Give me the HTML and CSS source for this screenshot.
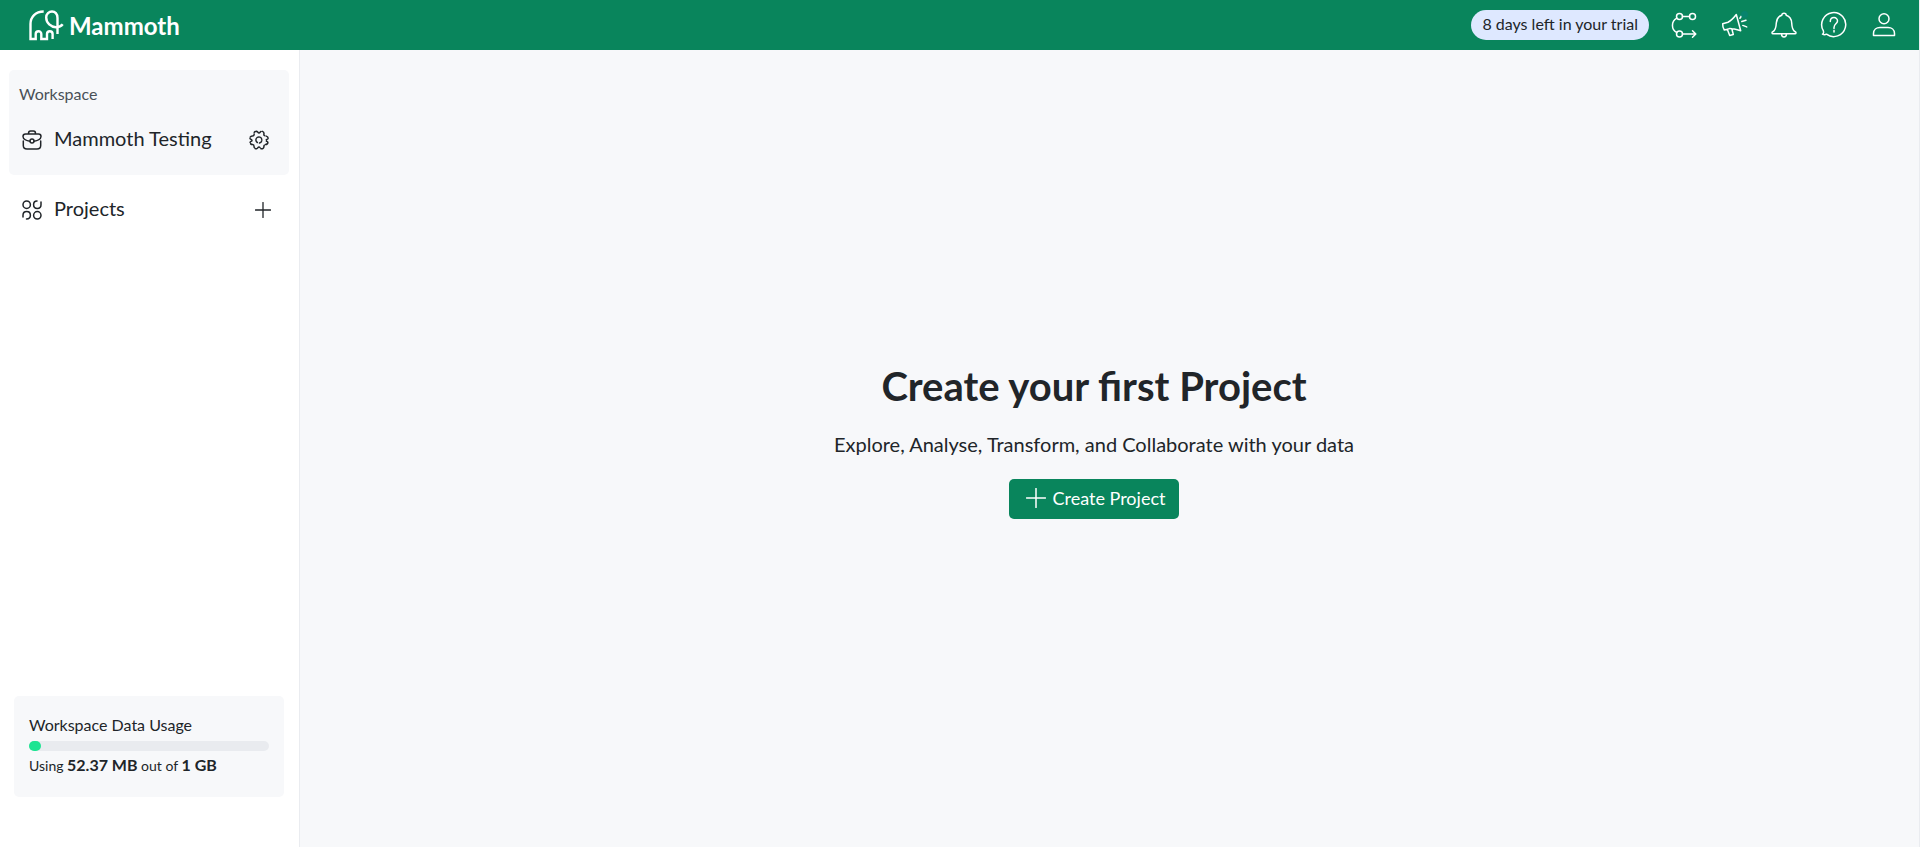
FILE: index.html
```html
<!DOCTYPE html>
<html lang="en">
<head>
<meta charset="utf-8">
<title>Mammoth</title>
<link rel="stylesheet" href="styles.css">
</head>
<body>
<header class="topbar">
  <a class="brand" href="#">
    <svg class="brand-mark" viewBox="0 0 36 32" aria-hidden="true"><path d="M15.7 2.5C7.500 2.500 2.500 8 2.500 15V30H7.700V25a2.800 2.800 0 0 1 5.600 0V30H19V25a2.800 2.800 0 0 1 5.600 0V30"/><path d="M29.500 25V9C29.500 4.800 27 2.500 24 2.500S18.200 5 18.200 8.500C18.200 14 23 18.200 28 18.200C31.500 18.200 33.500 17 34.700 15.300"/></svg>
    <span>Mammoth</span>
  </a>
  <span class="trial">8 days left in your trial</span>
  <nav class="actions">
    <button type="button" class="icon-btn" aria-label="Pipelines">
      <svg viewBox="0 0 28 28"><circle cx="9.500" cy="5.500" r="3"/><circle cx="22.500" cy="5.500" r="3"/><circle cx="9.500" cy="23" r="3"/><path d="M12.500 5.500h7M6.800 7.200C1 10.500 1 18.500 6.800 21.500M12.500 23H25.500M22.500 19.700 25.800 23l-3.300 3.300"/></svg>
    </button>
    <button type="button" class="icon-btn" aria-label="Announcements">
      <svg viewBox="0 0 28 28"><path d="M16.300 3.500 20.700 19.800C17 18.700 12 17.500 9.500 17.600L4.300 19C3.500 17.800 2.600 14.500 2.700 12.700L8 11.200C10.500 10 14 6.500 16.300 3.500ZM7.300 18.300 9.700 24.500 13.300 23.500 11.800 17.800M19.900 7.300l1.600-2.300M21.800 10.500l4.200-1.300M22.800 14.400l3.900 1.500"/></svg><i class="dot"></i>
    </button>
    <button type="button" class="icon-btn" aria-label="Notifications">
      <svg viewBox="0 0 28 28"><path d="M11.800 4.300C11.900 1.700 16.200 1.700 16.200 4.300C20 5.500 21.500 8.500 21.700 12C21.900 17 22.500 19.500 25.200 20.700C26.500 21.500 26 22.800 25 22.800H3C2 22.800 1.500 21.500 2.800 20.700C5.500 19.500 6.100 17 6.300 12C6.500 8.500 8 5.500 11.800 4.300ZM11.500 23c.2 4 4.800 4 5 0"/></svg>
    </button>
    <button type="button" class="icon-btn" aria-label="Help">
      <svg viewBox="0 0 28 28"><path d="M2.500 23.200C3.700 22.800 3.800 21.500 3.300 19.600A12 12 0 1 1 6.500 23.200C5.300 23.900 3.800 24 2.500 23.200Z"/><path d="M10.300 10.500C10.300 5.300 17.700 5.500 17.500 10C17.400 12.800 14 13 14 16.500V17.500M14 19.500v1.500"/></svg>
    </button>
    <button type="button" class="icon-btn" aria-label="Account">
      <svg viewBox="0 0 28 28"><circle cx="14" cy="7.800" r="5"/><path d="M3.500 24.500V22.500C3.500 18.500 6.500 16.500 10 16.500H18C21.500 16.500 24.500 18.500 24.500 22.500V24.500Z"/></svg>
    </button>
  </nav>
</header>
<div class="layout">
  <aside class="sidebar">
    <section class="workspace">
      <h2 class="label">Workspace</h2>
      <div class="row">
        <svg class="icon" viewBox="0 0 20 20"><path d="M6.500 3.500C6.500 1.500 7.500 1 8.500 1h3c1 0 2 .5 2 2.500M3.500 4h13C18 4 19 5 19 6.500C19 9 15.500 10.800 12 11.200M8 11.200C4.500 10.800 1 9 1 6.500C1 5 2 4 3.500 4M1.300 11V15.500C1.300 18 2.500 19 5 19H15C17.500 19 18.700 18 18.700 15.500V11"/><circle cx="10" cy="11" r="2"/></svg>
        <a class="name" href="#">Mammoth Testing</a>
        <button type="button" class="tool" aria-label="Workspace settings">
          <svg class="icon" viewBox="0 0 20 20"><path stroke-dasharray="5.500 1.500" d="M7.300 1.200C8.500 1 8.800 3 10 3S11.500 1 12.700 1.200C14.700 1.600 15.200 2.400 14.900 3.900C14.700 5.200 15.300 5.900 16.700 6C18.500 6.300 19.300 7.200 19 8.500C18.700 9.500 17 9.400 17 10.400S18.900 11.400 18.900 12.400C18.800 14 17.700 14.500 16.500 14.600C15.200 14.700 14.900 15.500 14.900 16.700C14.900 18.300 13.500 18.900 12.400 18.800C11.300 18.700 11.200 17 10 17S8.700 18.700 7.600 18.800C6.500 18.900 5.100 18.300 5.100 16.700C5.100 15.500 4.800 14.700 3.500 14.600C2.300 14.500 1.200 14 1.100 12.400C1.100 11.400 3 11.400 3 10.400S1.300 9.500 1 8.500C.7 7.200 1.500 6.300 3.300 6C4.700 5.900 5.300 5.200 5.100 3.900C4.900 2.400 5.300 1.600 7.300 1.200Z"/><path d="M8.300 12.500A3 3 0 1 1 12.800 9.300M12.800 10.700A3 3 0 0 1 10.500 13"/></svg>
        </button>
      </div>
    </section>
    <section class="projects row">
      <svg class="icon" viewBox="0 0 20 20"><circle cx="4.700" cy="4.700" r="3.700"/><circle cx="15.300" cy="15.300" r="3.700"/><path d="M15 1C12.600 1 11.600 2.400 11.600 4.700S13 8.400 15.300 8.400S19 7 19 4.700V2M1 17V15.300C1 13 2.400 11.600 4.700 11.600S8.400 13 8.400 15.300S7.400 19 4.500 19"/></svg>
      <a class="name" href="#">Projects</a>
      <button type="button" class="tool tool-add" aria-label="Add project">
        <svg viewBox="0 0 16 16"><path d="M8 .5v15M.5 8h15"/></svg>
      </button>
    </section>
    <section class="usage">
      <h2 class="usage-title">Workspace Data Usage</h2>
      <div class="meter" role="progressbar" aria-label="Workspace Data Usage" aria-valuenow="5" aria-valuemin="0" aria-valuemax="100"><div class="fill" style="width:5%"></div></div>
      <p class="usage-text">Using <strong>52.37 MB</strong> out of <strong>1 GB</strong></p>
    </section>
  </aside>
  <main class="content">
    <h1>Create your first Project</h1>
    <p class="lead">Explore, Analyse, Transform, and Collaborate with your data</p>
    <button type="button" class="primary">
      <svg viewBox="0 0 20 20" aria-hidden="true"><path d="M10 .5v19M.5 10h19"/></svg>
      Create Project
    </button>
  </main>
</div>
</body>
</html>
```
FILE: styles.css
```css
* { box-sizing: border-box; }
body {
  margin: 0;
  min-height: 100vh;
  display: flex;
  flex-direction: column;
  border-right: 1px solid #eaecf0;
  font-family: Lato, "Open Sans", sans-serif;
  color: #212529;
  background: #f7f8fa;
}
h1, h2, p { margin: 0; font-weight: 400; }
a { color: inherit; text-decoration: none; }
button { padding: 0; border: 0; background: none; color: inherit; font: inherit; cursor: pointer; }
svg { display: block; fill: none; stroke: currentColor; stroke-linecap: round; stroke-linejoin: round; }

.topbar {
  display: flex;
  align-items: center;
  height: 50px;
  padding: 0 21px 0 28px;
  background: #09855c;
  color: #fff;
}
.brand {
  display: flex;
  align-items: center;
  gap: 5px;
  margin-right: auto;
  font-size: 24px;
  font-weight: 700;
}
.brand-mark { width: 36px; height: 32px; stroke-width: 2.4; stroke-linecap: butt; stroke-linejoin: miter; }
.trial {
  height: 30px;
  padding: 0 11px;
  border-radius: 15px;
  background: #dee8ff;
  color: #212529;
  font-size: 16px;
  line-height: 28px;
}
.actions { display: flex; gap: 22px; margin-left: 21px; }
.icon-btn { position: relative; width: 28px; height: 28px; }
.icon-btn svg { width: 28px; height: 28px; stroke-width: 1.5; }
.dot { position: absolute; top: 0; right: 0; width: 7px; height: 7px; border-radius: 50%; background: #07836d; }

.layout { flex: 1; display: flex; }
.sidebar {
  flex: 0 0 300px;
  display: flex;
  flex-direction: column;
  padding: 20px 10px 50px 9px;
  border-right: 1px solid #eaecf0;
  background: #fff;
}
.workspace { height: 105px; padding: 13px 20px 0 10px; border-radius: 5px; background: #f7f8fa; }
.label { font-size: 16px; line-height: 22px; color: #495057; }
.row { display: flex; align-items: center; }
.workspace .row { padding: 20px 0 0 3px; }
.icon { width: 20px; height: 20px; stroke-width: 1.5; }
.name { flex: 1; margin-left: 12px; padding-bottom: 3px; font-size: 20px; line-height: 27px; }
.projects { padding: 20px 18px 0 13px; }
.tool-add svg { width: 16px; height: 16px; stroke-width: 1.3; }
.usage {
  height: 101px;
  margin: auto 5px 0;
  padding: 18px 15px 0;
  border-radius: 5px;
  background: #f7f8fa;
}
.usage-title { font-size: 16px; line-height: 22px; }
.meter { height: 10px; margin-top: 5px; border-radius: 5px; background: #e9ebef; }
.fill { height: 100%; border-radius: 5px; background: #1de492; }
.usage-text { font-size: 14px; line-height: 24px; margin-top: 2px; }
.usage-text strong { font-size: 16px; }

.content {
  flex: 1;
  display: flex;
  flex-direction: column;
  align-items: center;
  justify-content: center;
  padding: 0 31px 17px 0;
}
h1 { font-size: 40px; font-weight: 700; line-height: 48px; }
.lead { margin-top: 19px; font-size: 20px; line-height: 30px; }
.primary {
  display: flex;
  align-items: center;
  gap: 7px;
  height: 40px;
  margin-top: 20px;
  padding: 0 14px 2px 17px;
  border-radius: 5px;
  background: #09855c;
  color: #fff;
  font-size: 18px;
}
.primary svg { width: 20px; height: 20px; stroke-width: 1.5; }
```
